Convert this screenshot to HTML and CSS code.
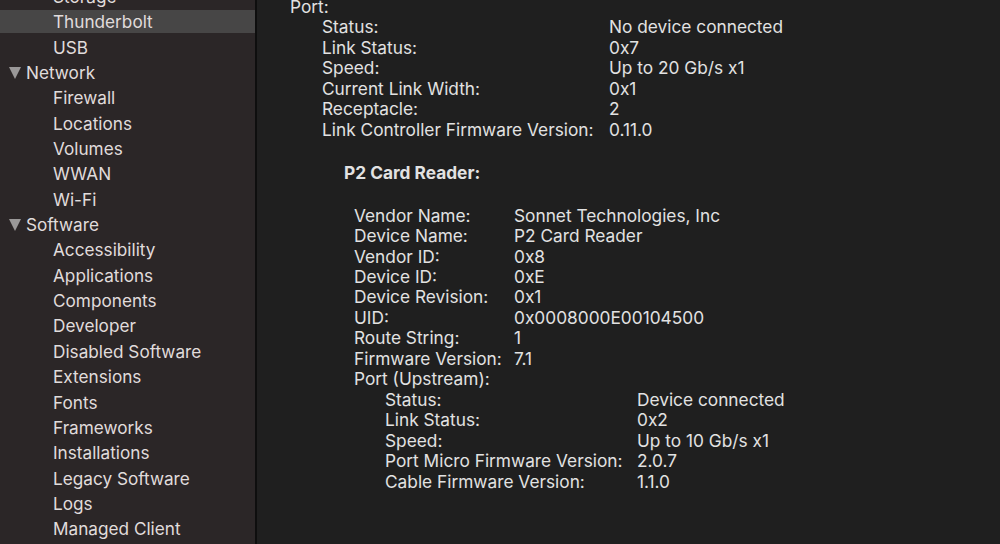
FILE: index.html
```html
<!DOCTYPE html>
<html>
<head>
<meta charset="utf-8">
<link rel="stylesheet" href="styles.css">
</head>
<body>
<div class="app">
  <aside class="sidebar">
    <ul class="tree">
      <li class="item child">Storage</li>
      <li class="item child selected">Thunderbolt</li>
      <li class="item child">USB</li>
      <li class="item group"><span class="tri"></span>Network</li>
      <li class="item child">Firewall</li>
      <li class="item child">Locations</li>
      <li class="item child">Volumes</li>
      <li class="item child">WWAN</li>
      <li class="item child">Wi-Fi</li>
      <li class="item group"><span class="tri"></span>Software</li>
      <li class="item child">Accessibility</li>
      <li class="item child">Applications</li>
      <li class="item child">Components</li>
      <li class="item child">Developer</li>
      <li class="item child">Disabled Software</li>
      <li class="item child">Extensions</li>
      <li class="item child">Fonts</li>
      <li class="item child">Frameworks</li>
      <li class="item child">Installations</li>
      <li class="item child">Legacy Software</li>
      <li class="item child">Logs</li>
      <li class="item child">Managed Client</li>
    </ul>
  </aside>
  <div class="divider"></div>
  <main class="content">
    <div class="heading port">Port:</div>
    <div class="kv kv-port">
      <div class="k">Status:</div><div class="v">No device connected</div>
      <div class="k">Link Status:</div><div class="v">0x7</div>
      <div class="k">Speed:</div><div class="v">Up to 20 Gb/s x1</div>
      <div class="k">Current Link Width:</div><div class="v">0x1</div>
      <div class="k">Receptacle:</div><div class="v">2</div>
      <div class="k">Link Controller Firmware Version:</div><div class="v">0.11.0</div>
    </div>
    <div class="device-title">P2 Card Reader:</div>
    <div class="kv kv-device">
      <div class="k">Vendor Name:</div><div class="v">Sonnet Technologies, Inc</div>
      <div class="k">Device Name:</div><div class="v">P2 Card Reader</div>
      <div class="k">Vendor ID:</div><div class="v">0x8</div>
      <div class="k">Device ID:</div><div class="v">0xE</div>
      <div class="k">Device Revision:</div><div class="v">0x1</div>
      <div class="k">UID:</div><div class="v">0x0008000E00104500</div>
      <div class="k">Route String:</div><div class="v">1</div>
      <div class="k">Firmware Version:</div><div class="v">7.1</div>
      <div class="k full">Port (Upstream):</div>
    </div>
    <div class="kv kv-up">
      <div class="k">Status:</div><div class="v">Device connected</div>
      <div class="k">Link Status:</div><div class="v">0x2</div>
      <div class="k">Speed:</div><div class="v">Up to 10 Gb/s x1</div>
      <div class="k">Port Micro Firmware Version:</div><div class="v">2.0.7</div>
      <div class="k">Cable Firmware Version:</div><div class="v">1.1.0</div>
    </div>
  </main>
</div>
</body>
</html>
```

FILE: styles.css
```css
* { box-sizing: border-box; }
html, body {
  margin: 0;
  padding: 0;
  width: 1000px;
  height: 544px;
  overflow: hidden;
  background: #1f1f1f;
  font-family: Inter, "Noto Sans", "Liberation Sans", sans-serif;
  color: #e2e2e2;
}
.app {
  display: flex;
  height: 544px;
}
.sidebar {
  width: 255px;
  flex: none;
  background: #2b2627;
  overflow: hidden;
}
.divider {
  width: 2px;
  flex: none;
  background: #0e0e0e;
}
.tree {
  list-style: none;
  margin: -16px 0 0 0;
  padding: 0;
}
.item {
  height: 25.35px;
  line-height: 25.35px;
  font-size: 17.2px;
  color: #e0dcdc;
  white-space: nowrap;
  display: flex;
  align-items: center;
}
.child { padding-left: 53px; }
.group { padding-left: 9px; }
.selected {
  background: #474646;
  height: 23px;
  margin: 1px 0 1.35px 0;
}
.tri {
  width: 0;
  height: 0;
  border-left: 6.5px solid transparent;
  border-right: 6.5px solid transparent;
  border-top: 12px solid #9a9898;
  margin-right: 5px;
  margin-top: 1px;
}
.content {
  flex: 1;
  padding: 0 0 0 33px;
  font-size: 17.3px;
  line-height: 20.45px;
  margin-top: -3px;
  white-space: nowrap;
}
.heading { color: #e2e2e2; }
.kv {
  display: grid;
}
.kv .full { grid-column: 1 / -1; }
.kv-port {
  grid-template-columns: 287px auto;
  padding-left: 32px;
}
.device-title {
  font-weight: 700;
  padding-left: 54px;
  margin-top: 23px;
  margin-bottom: 22px;
}
.kv-device {
  grid-template-columns: 160px auto;
  padding-left: 64px;
}
.kv-up {
  grid-template-columns: 252px auto;
  padding-left: 95px;
}
```
